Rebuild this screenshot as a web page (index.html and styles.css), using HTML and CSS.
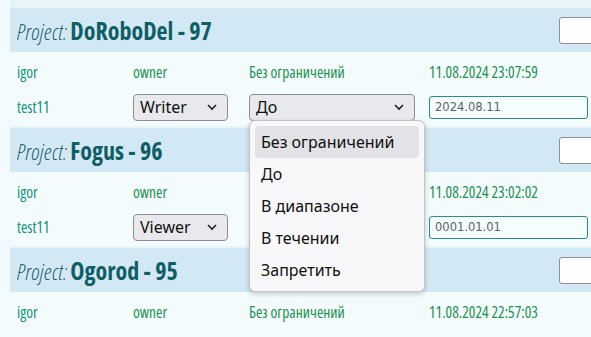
FILE: index.html
```html
<!DOCTYPE html>
<html lang="ru">
<head>
  <meta charset="UTF-8">
  <meta name="viewport" content="width=device-width, initial-scale=1.0">
  <title>Проекты</title>
  <link rel="stylesheet" href="styles.css">
</head>
<body>
  <main class="projects">
    <section class="project">
      <div class="project-head">
        <h2 class="project-title"><span class="label">Project:</span>DoRoboDel - 97</h2>
        <input class="head-input" type="text">
      </div>
      <div class="row">
        <span class="user">igor</span>
        <span>owner</span>
        <span>Без ограничений</span>
        <span>11.08.2024 23:07:59</span>
      </div>
      <div class="row row-edit">
        <span class="user">test11</span>
        <div class="select role">Writer
          <svg width="12" height="8" viewBox="0 0 12 8"><path d="M2 2l4 4 4-4" fill="none" stroke="#222" stroke-width="1.6"/></svg>
        </div>
        <div class="select limit">До
          <svg width="12" height="8" viewBox="0 0 12 8"><path d="M2 2l4 4 4-4" fill="none" stroke="#222" stroke-width="1.6"/></svg>
          <ul class="dropdown">
            <li class="active">Без ограничений</li>
            <li>До</li>
            <li>В диапазоне</li>
            <li>В течении</li>
            <li>Запретить</li>
          </ul>
        </div>
        <div class="date-input">2024.08.11</div>
      </div>
    </section>

    <section class="project">
      <div class="project-head">
        <h2 class="project-title"><span class="label">Project:</span>Fogus - 96</h2>
        <input class="head-input" type="text">
      </div>
      <div class="row">
        <span class="user">igor</span>
        <span>owner</span>
        <span></span>
        <span>11.08.2024 23:02:02</span>
      </div>
      <div class="row row-edit">
        <span class="user">test11</span>
        <div class="select role">Viewer
          <svg width="12" height="8" viewBox="0 0 12 8"><path d="M2 2l4 4 4-4" fill="none" stroke="#222" stroke-width="1.6"/></svg>
        </div>
        <span></span>
        <div class="date-input">0001.01.01</div>
      </div>
    </section>

    <section class="project">
      <div class="project-head">
        <h2 class="project-title"><span class="label">Project:</span>Ogorod - 95</h2>
        <input class="head-input" type="text">
      </div>
      <div class="row">
        <span class="user">igor</span>
        <span>owner</span>
        <span>Без ограничений</span>
        <span>11.08.2024 22:57:03</span>
      </div>
    </section>
  </main>
</body>
</html>
```
FILE: styles.css
```css
* {
  box-sizing: border-box;
}
body {
  margin: 0;
  background: #f3fbfe;
  overflow: hidden;
  font-family: "Open Sans", sans-serif;
  font-stretch: 75%;
}
.projects {
  margin-left: 10px;
  width: 640px;
  padding-top: 8px;
  background: #e7f4f9;
}
.project {
  margin-bottom: 2px;
}
.project-head {
  height: 44px;
  background: #d3e8f5;
  display: flex;
  align-items: center;
  padding: 0 7px;
}
.project-title {
  margin: 0;
  font-size: 24px;
  font-weight: bold;
  color: #115d66;
}
.project-title .label {
  font-weight: 300;
  font-style: italic;
  font-size: 22px;
  letter-spacing: 0.3px;
  color: #1a5e6e;
  margin-right: 3px;
}
.head-input {
  margin-left: auto;
  margin-right: 4px;
  width: 80px;
  height: 27px;
  border: 1px solid #8d929c;
  border-radius: 3px;
  background: #fff;
}
.row {
  display: grid;
  grid-template-columns: 116px 116px 180px 1fr;
  align-items: center;
  height: 36px;
  padding: 4px 7px 0;
  background: #f3fbfd;
  font-size: 15.5px;
  color: #23914f;
}
.row-edit {
  height: 38px;
  padding-top: 0;
}
.user {
  color: #16917a;
}
.select {
  position: relative;
  display: flex;
  align-items: center;
  justify-content: space-between;
  height: 27px;
  padding: 0 9px 0 6px;
  border: 1px solid #8c8c96;
  border-radius: 4px;
  background: #e9e8ed;
  font-family: "Noto Sans", sans-serif;
  font-stretch: 100%;
  font-size: 16px;
  color: #111;
}
.role {
  width: 95px;
}
.limit {
  width: 166px;
}
.dropdown {
  position: absolute;
  top: 25px;
  left: -1px;
  width: 176px;
  margin: 0;
  padding: 5px;
  list-style: none;
  background: #f8f8fa;
  border: 1px solid #c3c3c8;
  border-radius: 6px;
  box-shadow: 0 2px 5px rgba(0, 0, 0, 0.2);
  z-index: 2;
}
.dropdown li {
  height: 32px;
  line-height: 32px;
  padding-left: 6px;
  border-radius: 4px;
  color: #111;
}
.dropdown .active {
  background: #e2e2e7;
}
.date-input {
  width: 159px;
  height: 23px;
  padding-left: 5px;
  border: 1.5px solid #2b8a92;
  border-radius: 3px;
  background: #f6fdfd;
  font-family: "DejaVu Sans", sans-serif;
  font-stretch: 100%;
  font-size: 11.5px;
  line-height: 20px;
  color: #5b6270;
}
```
